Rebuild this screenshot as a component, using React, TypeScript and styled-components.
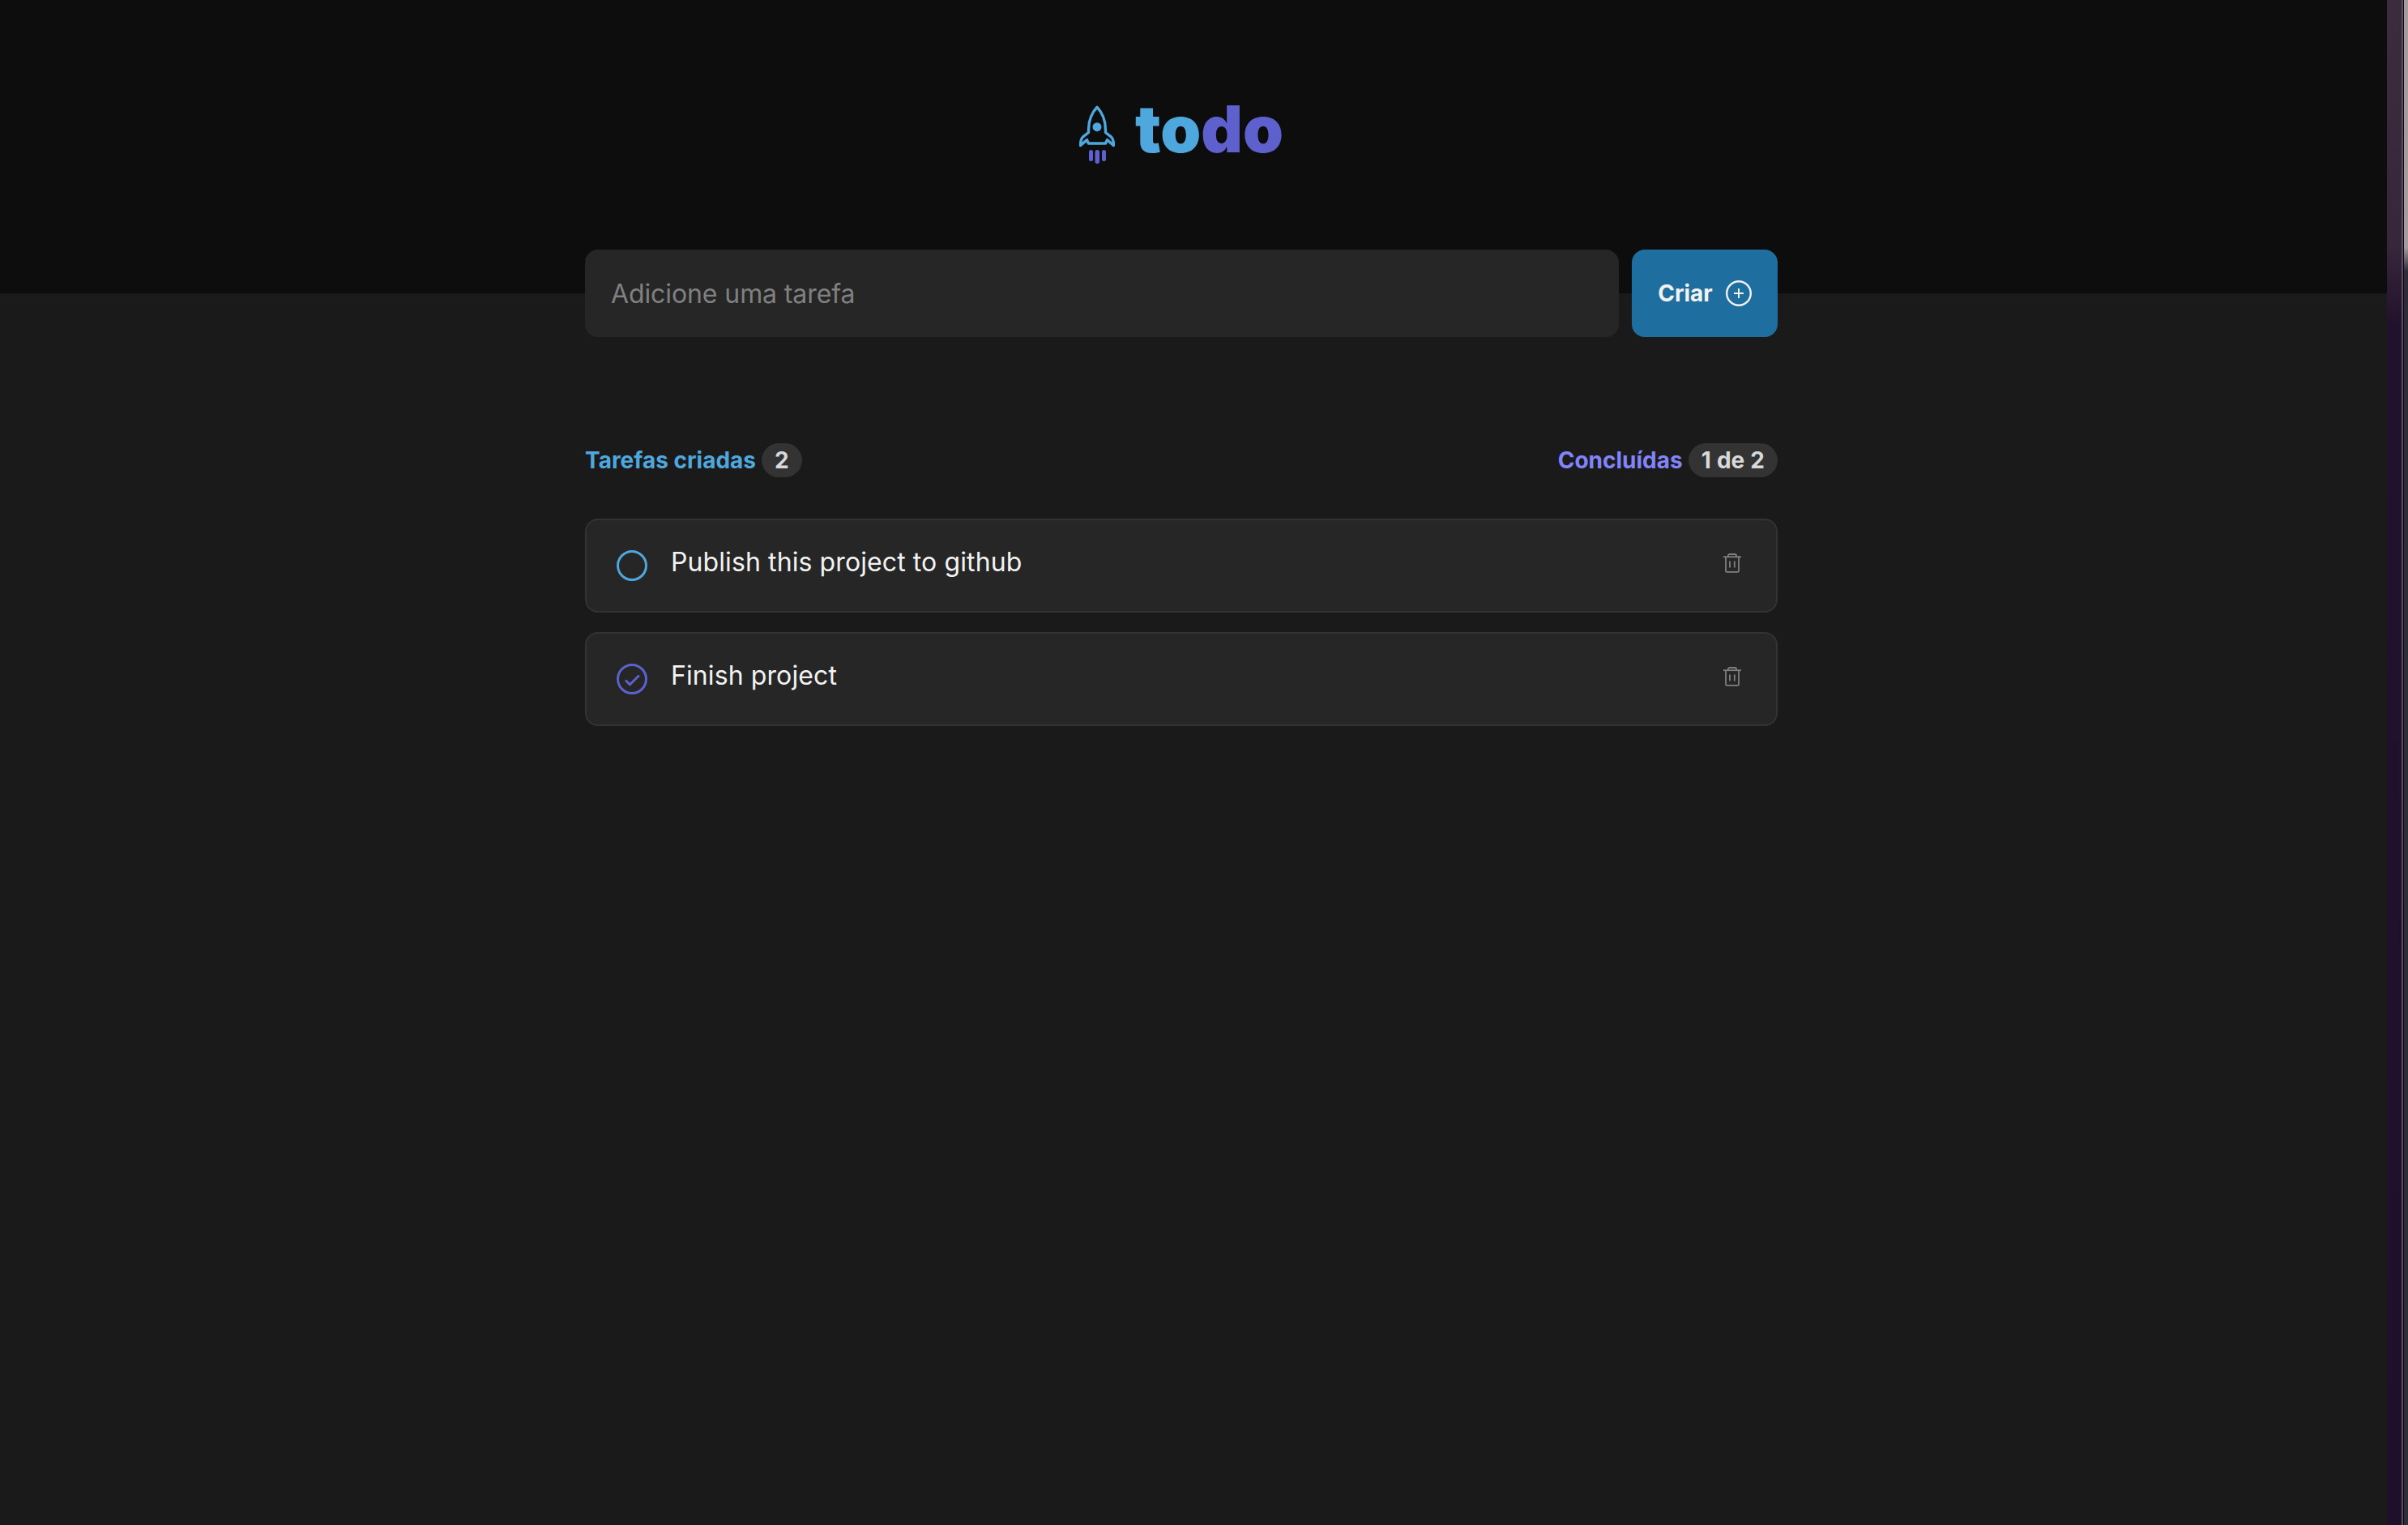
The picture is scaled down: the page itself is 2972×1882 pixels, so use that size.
import React from "react";
import styled, { createGlobalStyle } from "styled-components";

const Global = createGlobalStyle`
  html, body { margin: 0; padding: 0; height: 100%; background: #1a1a1a; }
  * { box-sizing: border-box; }
  body { font-family: Inter, "Noto Sans", sans-serif; color: #f2f2f2; }
`;

const Screen = styled.div`
  display: flex;
  width: 100vw;
  height: 100vh;
  overflow: hidden;
`;

const Page = styled.main`
  flex: 1;
  min-width: 0;
  display: flex;
  flex-direction: column;
  background: #1a1a1a;
`;

const Header = styled.header`
  height: 362px;
  flex: none;
  background: #0d0d0d;
  display: flex;
  justify-content: center;
  padding: 126px 30px 0 0;
`;

const Logo = styled.div`
  display: flex;
  align-items: flex-start;
  gap: 25px;
  height: 80px;
`;

const Wordmark = styled.h1`
  margin: -7px 0 0;
  font-size: 80px;
  line-height: 80px;
  font-weight: 900;
  letter-spacing: 0;
`;

const WordBlue = styled.span`
  color: #4ea8de;
`;

const WordPurple = styled.span`
  color: #5e60ce;
`;

const Content = styled.section`
  width: 1472px;
  align-self: center;
  margin: -54px 30px 0 0;
  display: flex;
  flex-direction: column;
`;

const Form = styled.form`
  display: flex;
  gap: 16px;
  height: 108px;
`;

const Input = styled.input`
  flex: 1;
  min-width: 0;
  border: 0;
  outline: 0;
  border-radius: 16px;
  background: #262626;
  padding: 0 32px;
  font: 400 32px Inter, sans-serif;
  letter-spacing: -0.1px;
  color: #f2f2f2;
  &::placeholder {
    color: #808080;
    opacity: 1;
  }
`;

const CreateButton = styled.button`
  width: 180px;
  border: 0;
  border-radius: 16px;
  background: #1e6f9f;
  color: #f2f2f2;
  font: 700 28px Inter, sans-serif;
  display: flex;
  align-items: center;
  justify-content: center;
  gap: 16px;
  padding: 0;
`;

const Stats = styled.div`
  display: flex;
  justify-content: space-between;
  align-items: center;
  margin-top: 131px;
  height: 42px;
`;

const Stat = styled.div`
  display: flex;
  align-items: center;
  gap: 7px;
`;

const StatLabel = styled.span<{ $tone: string }>`
  color: ${(p) => p.$tone};
  font-size: 28px;
  font-weight: 700;
`;

const Badge = styled.span`
  height: 42px;
  padding: 0 16px;
  border-radius: 21px;
  background: #333333;
  color: #d9d9d9;
  font-size: 28px;
  font-weight: 700;
  line-height: 42px;
  word-spacing: 0.5px;
`;

const List = styled.ul`
  list-style: none;
  margin: 51px 0 0;
  padding: 0;
  display: flex;
  flex-direction: column;
  gap: 24px;
`;

const Card = styled.li`
  height: 116px;
  display: flex;
  align-items: flex-start;
  padding: 28px 43px 0 37px;
  border: 2px solid #333333;
  border-radius: 16px;
  background: #262626;
`;

const Check = styled.svg`
  flex: none;
  align-self: center;
  margin-top: -28px;
`;

const TaskText = styled.p`
  flex: 1;
  margin: 0 0 0 29px;
  font-size: 32px;
  line-height: 48px;
  letter-spacing: 0.1px;
  color: #f2f2f2;
`;

const Trash = styled.svg`
  flex: none;
  margin-top: 13px;
`;

const Strip = styled.aside`
  flex: none;
  width: 26px;
  display: flex;
`;

const Band = styled.div<{ $w: number; $bg: string }>`
  flex: none;
  width: ${(p) => p.$w}px;
  background: ${(p) => p.$bg};
`;

const RocketIcon = styled.svg`
  flex: none;
  margin-top: 4px;
`;

const Rocket = () => (
  <RocketIcon width="44" height="72" viewBox="0 0 44 72" fill="none">
    <path
      d="M22 2.2C16.5 7.8 11.5 18 11.5 30V33.5L5 38.6C2.8 40.6 1.4 43.5 1.6 49.5L9.5 42.6 11.5 47H32.5L34.5 42.6 42.4 49.5C42.6 43.5 41.2 40.6 39 38.6L32.5 33.5V30C32.5 18 27.5 7.8 22 2.2Z"
      stroke="#4ea8de"
      strokeWidth="3.4"
      strokeLinejoin="round"
    />
    <circle cx="22" cy="26.7" r="5.5" fill="#4ea8de" />
    <rect x="12" y="55" width="5" height="14" rx="2.5" fill="#5e60ce" />
    <rect x="19.5" y="55" width="5.5" height="17" rx="2.7" fill="#5e60ce" />
    <rect x="28" y="55" width="5" height="14" rx="2.5" fill="#5e60ce" />
  </RocketIcon>
);

const PlusCircle = () => (
  <svg width="32" height="32" viewBox="0 0 32 32" fill="none" stroke="#f2f2f2" strokeWidth="2.4">
    <circle cx="16" cy="16" r="14.8" />
    <path d="M16 10V22M10 16H22" strokeWidth="2" />
  </svg>
);

const TrashIcon = () => (
  <Trash width="22" height="24" viewBox="0 0 22 24" fill="none" stroke="#808080" strokeWidth="1.8">
    <path d="M0 4.2H22" />
    <path d="M6 4V2.6C6 1.6 6.8 1 7.8 1H14.2C15.2 1 16 1.6 16 2.6V4" />
    <path d="M3 4.2V21.6C3 22.3 3.6 22.9 4.3 22.9H17.7C18.4 22.9 19 22.3 19 21.6V4.2" />
    <path d="M8 9.5V17.5M13.8 9.5V17.5" />
  </Trash>
);

const TaskCheck = ({ done }: { done: boolean }) => (
  <Check width="38" height="38" viewBox="0 0 38 38" fill="none">
    <circle cx="19" cy="19" r="17.5" stroke={done ? "#5e60ce" : "#4ea8de"} strokeWidth="3" />
    {done && (
      <path d="M11 20.5L16.5 25.8L27.8 14.5" stroke="#5e60ce" strokeWidth="3" strokeLinejoin="round" />
    )}
  </Check>
);

const tasks = [
  { id: 1, text: "Publish this project to github", done: false },
  { id: 2, text: "Finish project", done: true },
];

export default function App() {
  return (
    <Screen>
      <Global />
      <Page>
        <Header>
          <Logo>
            <Rocket />
            <Wordmark>
              <WordBlue>to</WordBlue>
              <WordPurple>do</WordPurple>
            </Wordmark>
          </Logo>
        </Header>
        <Content>
          <Form>
            <Input placeholder="Adicione uma tarefa" />
            <CreateButton type="button">
              Criar
              <PlusCircle />
            </CreateButton>
          </Form>
          <Stats>
            <Stat>
              <StatLabel $tone="#4ea8de">Tarefas criadas</StatLabel>
              <Badge>2</Badge>
            </Stat>
            <Stat>
              <StatLabel $tone="#8284fa">Concluídas</StatLabel>
              <Badge>1 de 2</Badge>
            </Stat>
          </Stats>
          <List>
            {tasks.map((t) => (
              <Card key={t.id}>
                <TaskCheck done={t.done} />
                <TaskText>{t.text}</TaskText>
                <TrashIcon />
              </Card>
            ))}
          </List>
        </Content>
      </Page>
      <Strip>
        <Band $w={18} $bg="linear-gradient(180deg, #3c2a3e 0, #38263c 300px, #21122b 400px, #1f1029 100%)" />
        <Band $w={2} $bg="#5a4a62" />
        <Band $w={1} $bg="#0a0a0c" />
        <Band $w={5} $bg="linear-gradient(180deg, #a59a9c 0, #a59a9c 305px, #2c2d38 335px, #2c2f3a 100%)" />
      </Strip>
    </Screen>
  );
}
